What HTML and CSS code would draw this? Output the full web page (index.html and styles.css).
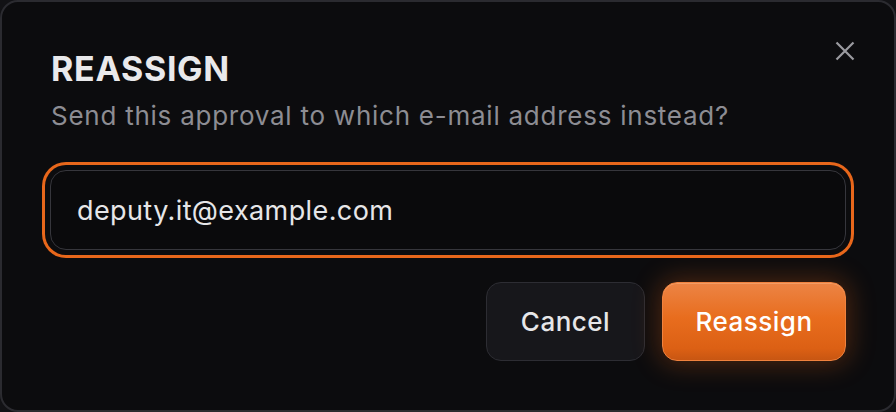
FILE: index.html
```html
<!DOCTYPE html>
<html lang="en">
<head>
<meta charset="utf-8">
<title>Reassign</title>
<link rel="stylesheet" href="styles.css">
</head>
<body>
<div class="dialog">
  <button class="close" aria-label="Close">
    <svg width="20" height="20" viewBox="0 0 20 20"><path d="M1.5 1.5 L18.5 18.5 M18.5 1.5 L1.5 18.5" stroke="#9b9ba0" stroke-width="2.2" stroke-linecap="butt" fill="none"/></svg>
  </button>
  <h1 class="title">REASSIGN</h1>
  <p class="subtitle">Send this approval to which e-mail address instead?</p>
  <div class="field">deputy.it@example.com</div>
  <div class="actions">
    <button class="btn btn-cancel">Cancel</button>
    <button class="btn btn-primary">Reassign</button>
  </div>
</div>
</body>
</html>
```
FILE: styles.css
```css
* { box-sizing: border-box; }
html, body { margin: 0; padding: 0; background: #121215; }
body { font-family: Inter, "Noto Sans", sans-serif; }
.dialog {
  position: relative;
  width: 896px;
  height: 412px;
  background: #0c0c0e;
  border: 2px solid #2b2b30;
  border-radius: 18px;
  padding: 47px 48px 0 48px;
  display: flex;
  flex-direction: column;
}
.close {
  position: absolute;
  top: 39px;
  right: 39px;
  width: 20px;
  height: 20px;
  padding: 0;
  border: 0;
  background: none;
  display: flex;
}
.title {
  margin: 0;
  font-size: 34px;
  line-height: 40px;
  font-weight: 700;
  color: #e9e9eb;
  letter-spacing: 0.7px;
  padding-left: 1px;
}
.subtitle {
  margin: 12px 0 0 0;
  font-size: 26px;
  line-height: 30px;
  letter-spacing: 0.75px;
  color: #8d8d93;
  padding-left: 1px;
}
.field {
  margin-top: 39px;
  height: 80px;
  border: 1.5px solid #36363c;
  border-radius: 16px;
  background: #0a0a0c;
  box-shadow: 0 0 0 5px #0c0c0e, 0 0 0 8px #e8671b;
  display: flex;
  align-items: center;
  padding-left: 26px;
  font-size: 27px;
  letter-spacing: 0.4px;
  color: #e6e6e8;
}
.actions {
  margin-top: 32px;
  display: flex;
  justify-content: flex-end;
  gap: 17px;
}
.btn {
  height: 79px;
  border-radius: 15px;
  font-family: Inter, "Noto Sans", sans-serif;
  font-size: 26px;
  font-weight: 500;
  letter-spacing: 0.5px;
  padding: 0;
}
.btn-cancel {
  width: 159px;
  background: #17171b;
  border: 1.5px solid #2d2d33;
  color: #e6e6e8;
}
.btn-primary {
  width: 184px;
  color: #ffffff;
  border: 1.5px solid #f0823e;
  background: linear-gradient(180deg, #ec8445 0%, #e86d1e 45%, #dc6014 85%, #c85612 100%);
  box-shadow: 0 0 26px 4px rgba(232, 100, 20, 0.28), inset 0 1px 0 rgba(255, 200, 160, 0.35);
}
```
